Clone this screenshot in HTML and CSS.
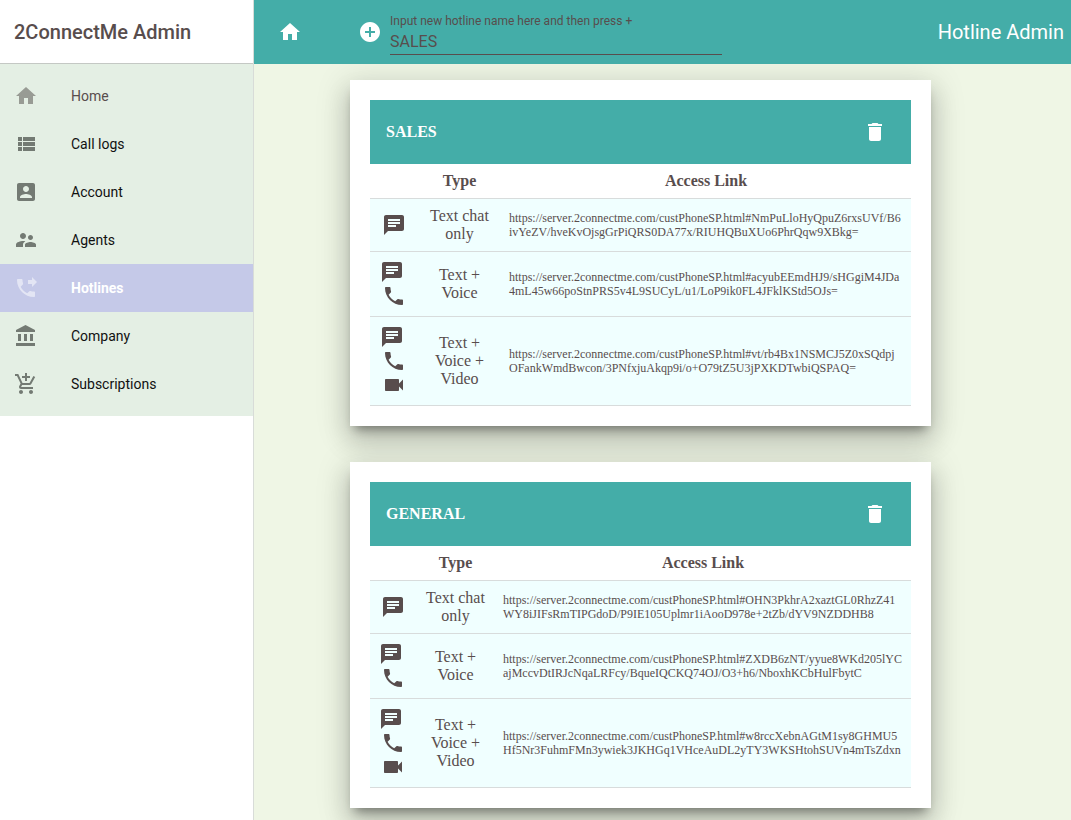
FILE: index.html
```
<!DOCTYPE html>
<html lang="en">
<head>
<meta charset="utf-8">
<title>Hotline Admin</title>
<link rel="stylesheet" href="styles.css">
</head>
<body>
<svg class="sprite" aria-hidden="true">
  <symbol id="home" viewBox="0 0 24 24"><path d="M10 20v-6h4v6h5v-8h3L12 3 2 12h3v8z"/></symbol>
  <symbol id="list" viewBox="0 0 24 24"><path d="M4 14h4v-4H4v4zm0 5h4v-4H4v4zM4 9h4V5H4v4zm5 5h12v-4H9v4zm0 5h12v-4H9v4zM9 5v4h12V5H9z"/></symbol>
  <symbol id="account" viewBox="0 0 24 24"><path d="M3 5v14c0 1.1.89 2 2 2h14c1.1 0 2-.9 2-2V5c0-1.1-.9-2-2-2H5c-1.11 0-2 .9-2 2zm12 4c0 1.66-1.34 3-3 3s-3-1.34-3-3 1.34-3 3-3 3 1.34 3 3zm-9 8c0-2 4-3.1 6-3.1s6 1.1 6 3.1v1H6v-1z"/></symbol>
  <symbol id="agents" viewBox="0 0 24 24"><path d="M16.5 12c1.38 0 2.49-1.12 2.49-2.5S17.88 7 16.5 7C15.12 7 14 8.12 14 9.5s1.12 2.5 2.5 2.5zM9 11c1.66 0 2.99-1.34 2.99-3S10.66 5 9 5C7.34 5 6 6.34 6 8s1.34 3 3 3zm7.5 3c-1.83 0-5.5.92-5.5 2.75V19h11v-2.25c0-1.83-3.67-2.75-5.5-2.75zM9 13c-2.33 0-7 1.17-7 3.5V19h7v-2.25c0-.85.33-2.34 2.37-3.47C10.5 13.1 9.66 13 9 13z"/></symbol>
  <symbol id="forward" viewBox="0 0 24 24"><path d="M18 11l5-5-5-5v3h-4v4h4v3zm2 4.5c-1.25 0-2.45-.2-3.57-.57-.35-.11-.74-.03-1.02.24l-2.2 2.2c-2.83-1.44-5.15-3.75-6.59-6.59l2.2-2.21c.28-.26.36-.65.25-1C8.7 6.45 8.5 5.25 8.5 4c0-.55-.45-1-1-1H4c-.55 0-1 .45-1 1 0 9.39 7.61 17 17 17 .55 0 1-.45 1-1v-3.5c0-.55-.45-1-1-1z"/></symbol>
  <symbol id="company" viewBox="0 0 24 24"><path d="M4 10v7h3v-7H4zm6 0v7h3v-7h-3zM2 22h19v-3H2v3zm14-12v7h3v-7h-3zm-4.5-9L2 6v2h19V6l-9.500-5z"/></symbol>
  <symbol id="cart" viewBox="0 0 24 24"><path d="M11 9h2V6h3V4h-3V1h-2v3H8v2h3v3zm-4 9c-1.100 0-1.990.9-1.990 2S5.900 22 7 22s2-.9 2-2-.9-2-2-2zm10 0c-1.100 0-1.990.9-1.990 2s.89 2 1.990 2 2-.9 2-2-.9-2-2-2zm-9.830-3.250l.03-.12.9-1.630h7.450c.75 0 1.410-.41 1.750-1.030l3.860-7.010L19.420 4h-.01l-1.100 2-2.760 5H8.530l-.13-.27L6.160 6l-.95-2-.94-2H1v2h2l3.600 7.590-1.350 2.450c-.16.28-.25.61-.25.96 0 1.100.9 2 2 2h12v-2H7.420c-.13 0-.25-.11-.25-.25z"/></symbol>
  <symbol id="add" viewBox="0 0 24 24"><path d="M12 2C6.480 2 2 6.480 2 12s4.480 10 10 10 10-4.480 10-10S17.520 2 12 2zm5 11h-4v4h-2v-4H7v-2h4V7h2v4h4v2z"/></symbol>
  <symbol id="trash" viewBox="0 0 24 24"><path d="M6 19c0 1.100.9 2 2 2h8c1.100 0 2-.9 2-2V7H6v12zM19 4h-3.500l-1-1h-5l-1 1H5v2h14V4z"/></symbol>
  <symbol id="chat" viewBox="0 0 24 24"><path d="M20 2H4c-1.100 0-1.990.9-1.990 2L2 22l4-4h14c1.100 0 2-.9 2-2V4c0-1.100-.9-2-2-2zM6 9h12v2H6V9zm8 5H6v-2h8v2zm4-6H6V6h12v2z"/></symbol>
  <symbol id="phone" viewBox="0 0 24 24"><path d="M20 15.500c-1.250 0-2.450-.2-3.570-.57-.35-.11-.74-.03-1.020.24l-2.200 2.200c-2.830-1.440-5.150-3.750-6.590-6.590l2.200-2.210c.28-.26.36-.65.25-1C8.700 6.450 8.500 5.250 8.500 4c0-.55-.45-1-1-1H4c-.55 0-1 .45-1 1 0 9.390 7.610 17 17 17 .55 0 1-.45 1-1v-3.500c0-.55-.45-1-1-1z"/></symbol>
  <symbol id="video" viewBox="0 0 24 24"><path d="M17 10.500V7c0-.55-.45-1-1-1H4c-.55 0-1 .45-1 1v10c0 .55.45 1 1 1h12c.55 0 1-.45 1-1v-3.500l4 4v-11l-4 4z"/></symbol>
</svg>
<div class="app">
  <aside class="sidebar">
    <h1 class="brand">2ConnectMe Admin</h1>
    <nav class="menu">
      <a class="item item-home" href="#home"><svg class="icon"><use href="#home"/></svg>Home</a>
      <a class="item" href="#logs"><svg class="icon"><use href="#list"/></svg>Call logs</a>
      <a class="item" href="#acct"><svg class="icon"><use href="#account"/></svg>Account</a>
      <a class="item" href="#agent"><svg class="icon"><use href="#agents"/></svg>Agents</a>
      <a class="item item-active" href="#hotlines" aria-current="page"><svg class="icon"><use href="#forward"/></svg>Hotlines</a>
      <a class="item" href="#org"><svg class="icon"><use href="#company"/></svg>Company</a>
      <a class="item" href="#subs"><svg class="icon"><use href="#cart"/></svg>Subscriptions</a>
    </nav>
  </aside>
  <div class="page">
    <header class="toolbar">
      <button class="icon-button" type="button" aria-label="Home"><svg class="icon"><use href="#home"/></svg></button>
      <div class="new-hotline">
        <button class="icon-button" type="button" aria-label="Add hotline"><svg class="icon"><use href="#add"/></svg></button>
        <div class="field">
          <label class="field-label" for="hotline-name">Input new hotline name here and then press +</label>
          <input class="field-input" id="hotline-name" type="text" value="SALES">
        </div>
      </div>
      <h2 class="page-title">Hotline Admin</h2>
    </header>
    <main class="content">
      <section class="card">
        <div class="card-header">
          <h3 class="card-title">SALES</h3>
          <button class="icon-button" type="button" aria-label="Delete SALES"><svg class="icon"><use href="#trash"/></svg></button>
        </div>
        <table class="links">
          <colgroup><col class="col-icons"><col class="col-type"><col></colgroup>
          <thead><tr><th></th><th scope="col">Type</th><th scope="col">Access Link</th></tr></thead>
          <tbody>
            <tr>
              <td><div class="icons"><svg class="icon"><use href="#chat"/></svg></div></td>
              <td>Text chat only</td>
              <td class="url">https://server.2connectme.com/custPhoneSP.html#NmPuLloHyQpuZ6rxsUVf/B6<wbr>ivYeZV/hveKvOjsgGrPiQRS0DA77x/RIUHQBuXUo6PhrQqw9XBkg=</td>
            </tr>
            <tr>
              <td><div class="icons icons-stack"><svg class="icon"><use href="#chat"/></svg><svg class="icon"><use href="#phone"/></svg></div></td>
              <td>Text + Voice</td>
              <td class="url">https://server.2connectme.com/custPhoneSP.html#acyubEEmdHJ9/sHGgiM4JDa<wbr>4mL45w66poStnPRS5v4L9SUCyL/u1/LoP9ik0FL4JFklKStd5OJs=</td>
            </tr>
            <tr>
              <td><div class="icons icons-stack"><svg class="icon"><use href="#chat"/></svg><svg class="icon"><use href="#phone"/></svg><svg class="icon"><use href="#video"/></svg></div></td>
              <td>Text + Voice + Video</td>
              <td class="url">https://server.2connectme.com/custPhoneSP.html#vt/rb4Bx1NSMCJ5Z0xSQdpj<wbr>OFankWmdBwcon/3PNfxjuAkqp9i/o+O79tZ5U3jPXKDTwbiQSPAQ=</td>
            </tr>
          </tbody>
        </table>
      </section>
      <section class="card">
        <div class="card-header">
          <h3 class="card-title">GENERAL</h3>
          <button class="icon-button" type="button" aria-label="Delete GENERAL"><svg class="icon"><use href="#trash"/></svg></button>
        </div>
        <table class="links links-wide">
          <colgroup><col class="col-icons"><col class="col-type"><col></colgroup>
          <thead><tr><th></th><th scope="col">Type</th><th scope="col">Access Link</th></tr></thead>
          <tbody>
            <tr>
              <td><div class="icons"><svg class="icon"><use href="#chat"/></svg></div></td>
              <td>Text chat only</td>
              <td class="url">https://server.2connectme.com/custPhoneSP.html#OHN3PkhrA2xaztGL0RhzZ41<wbr>WY8iJIFsRmTIPGdoD/P9IE105Uplmr1iAooD978e+2tZb/dYV9NZDDHB8</td>
            </tr>
            <tr>
              <td><div class="icons icons-stack"><svg class="icon"><use href="#chat"/></svg><svg class="icon"><use href="#phone"/></svg></div></td>
              <td>Text + Voice</td>
              <td class="url">https://server.2connectme.com/custPhoneSP.html#ZXDB6zNT/yyue8WKd205lYC<wbr>ajMccvDtIRJcNqaLRFcy/BqueIQCKQ74OJ/O3+h6/NboxhKCbHulFbytC</td>
            </tr>
            <tr>
              <td><div class="icons icons-stack"><svg class="icon"><use href="#chat"/></svg><svg class="icon"><use href="#phone"/></svg><svg class="icon"><use href="#video"/></svg></div></td>
              <td>Text + Voice + Video</td>
              <td class="url">https://server.2connectme.com/custPhoneSP.html#w8rccXebnAGtM1sy8GHMU5<wbr>Hf5Nr3FuhmFMn3ywiek3JKHGq1VHceAuDL2yTY3WKSHtohSUVn4mTsZdxn</td>
            </tr>
          </tbody>
        </table>
      </section>
    </main>
  </div>
</div>
</body>
</html>
```
FILE: styles.css
```
* { box-sizing: border-box; }
body {
  margin: 0;
  color: #584d4d;
  background: #fff;
  font-family: Roboto, sans-serif;
}
h1, h2, h3 { margin: 0; }
.sprite { display: none; }
.icon { display: block; width: 24px; height: 24px; fill: currentColor; flex: none; }
.icon-button {
  display: block;
  padding: 0;
  border: 0;
  background: none;
  color: #fff;
  cursor: pointer;
}

.app { display: flex; height: 100vh; }
.sidebar { flex: 0 0 254px; border-right: 1px solid #d8dcd8; }
.brand {
  height: 64px;
  padding: 0 14px;
  border-bottom: 1px solid #c4c8c4;
  font-size: 20px;
  font-weight: 500;
  line-height: 64px;
}
.menu { padding: 8px 0; background: #e4efe4; }
.item {
  display: flex;
  align-items: center;
  gap: 33px;
  height: 48px;
  padding: 0 14px;
  color: #111;
  font-size: 14px;
  text-decoration: none;
}
.item .icon { fill: #737a73; }
.item-home { color: #584d4d; }
.item-home .icon { fill: #989b94; }
.item-active { background: #c5c9e8; color: #fff; font-weight: 700; }
.item-active .icon { fill: #e3e5f4; }

.page { flex: 1; min-width: 0; display: flex; flex-direction: column; }
.toolbar {
  flex: none;
  display: flex;
  align-items: center;
  height: 64px;
  padding: 0 7px 0 24px;
  background: #44ada8;
}
.new-hotline { display: flex; align-items: center; gap: 8px; width: 364px; margin-left: 56px; }
.field { flex: 1; min-width: 0; border-bottom: 1px solid #584d4d; margin-top: 4px; }
.field-label { display: block; font-size: 12px; line-height: 16px; }
.field-input {
  display: block;
  width: 100%;
  height: 25px;
  padding: 0;
  border: 0;
  outline: 0;
  background: none;
  color: inherit;
  font: 16px/24px Roboto, sans-serif;
}
.page-title { margin-left: auto; color: #fff; font-size: 20px; font-weight: 400; white-space: nowrap; }

.content {
  flex: 1;
  min-height: 0;
  overflow: hidden;
  display: flex;
  flex-direction: column;
  gap: 36px;
  padding: 16px 16px 16px 96px;
  background: #eff6e5;
  font-family: "Liberation Serif", serif;
}
.card {
  flex: none;
  width: 100%;
  max-width: 581px;
  padding: 20px;
  background: #fff;
  box-shadow: 0 16px 24px 2px rgba(0, 0, 0, .14), 0 6px 30px 5px rgba(0, 0, 0, .12), 0 8px 10px -5px rgba(0, 0, 0, .4);
}
.card-header {
  display: flex;
  align-items: center;
  justify-content: space-between;
  height: 64px;
  padding: 0 24px 0 16px;
  background: #44ada8;
  color: #fff;
}
.card-title { font-size: 16px; font-weight: 700; }
.links { width: 100%; table-layout: fixed; border-collapse: separate; border-spacing: 0; }
.col-icons { width: 48px; }
.col-type { width: 83px; }
.links-wide .col-icons { width: 46px; }
.links-wide .col-type { width: 79px; }
.links th, .links td {
  padding: 8px;
  border-bottom: 1px solid #d8dcdc;
  font-size: 16px;
  line-height: 18px;
  text-align: center;
  vertical-align: middle;
}
.links td { background: #f0ffff; }
.links .url { font-size: 12px; line-height: 14px; text-align: left; overflow-wrap: anywhere; }
.icons { display: flex; flex-direction: column; align-items: center; }
.icons-stack .icon:first-child { margin-right: 4px; }
```
